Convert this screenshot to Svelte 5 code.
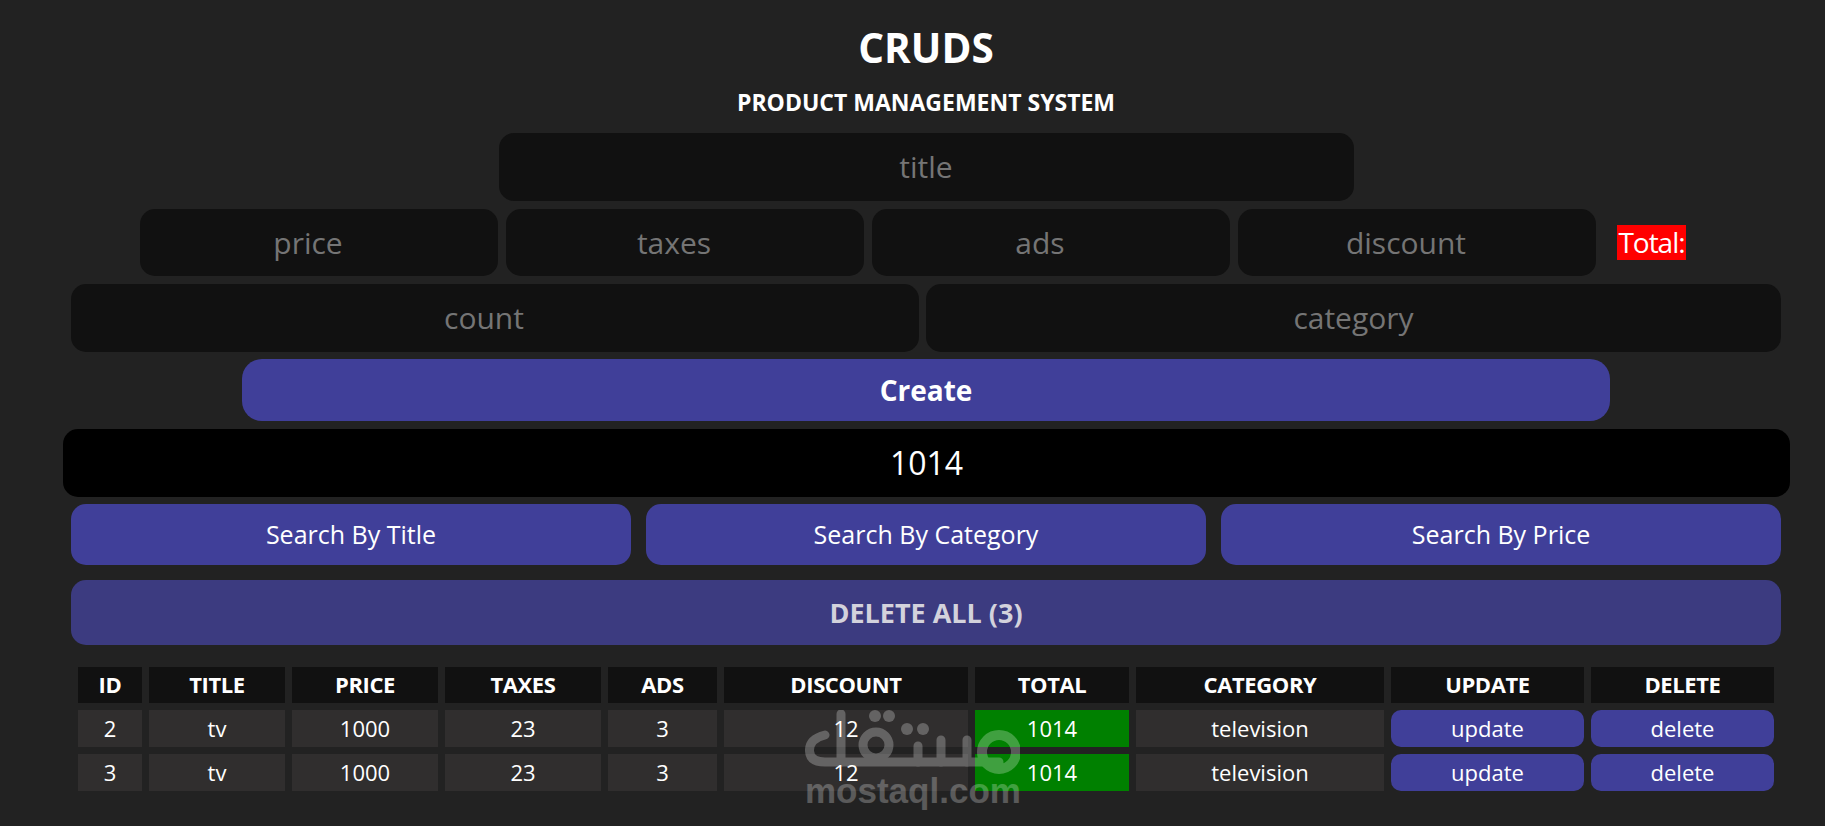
<script>
  const rows = [
    { id: 2, title: 'tv', price: 1000, taxes: 23, ads: 3, discount: 12, total: 1014, category: 'television' },
    { id: 3, title: 'tv', price: 1000, taxes: 23, ads: 3, discount: 12, total: 1014, category: 'television' }
  ];
  const cols = ['ID', 'TITLE', 'PRICE', 'TAXES', 'ADS', 'DISCOUNT', 'TOTAL', 'CATEGORY', 'UPDATE', 'DELETE'];
  const widths = [64, 136, 146, 156, 109, 244, 154, 248, 193, 183];
</script>

<main class="page">
  <header class="head">
    <h1>CRUDS</h1>
    <p>PRODUCT MANAGEMENT SYSTEM</p>
  </header>

  <div class="row center">
    <input class="field title" placeholder="title" />
  </div>

  <div class="row prices">
    <input class="field shifted" placeholder="price" />
    <input class="field shifted" placeholder="taxes" />
    <input class="field shifted" placeholder="ads" />
    <input class="field shifted" placeholder="discount" />
    <small class="total">Total:</small>
  </div>

  <div class="row pair">
    <input class="field shifted count" placeholder="count" />
    <input class="field category" placeholder="category" />
  </div>

  <button class="create">Create</button>

  <input class="search" value="1014" />

  <div class="row trio">
    <button class="btn">Search By Title</button>
    <button class="btn">Search By Category</button>
    <button class="btn">Search By Price</button>
  </div>

  <button class="clear">DELETE ALL (3)</button>

  <table>
    <colgroup>
      {#each widths as w}<col style="width:{w}px" />{/each}
    </colgroup>
    <thead>
      <tr>{#each cols as c}<th>{c}</th>{/each}</tr>
    </thead>
    <tbody>
      {#each rows as r}
        <tr>
          <td>{r.id}</td>
          <td>{r.title}</td>
          <td>{r.price}</td>
          <td>{r.taxes}</td>
          <td>{r.ads}</td>
          <td>{r.discount}</td>
          <td class="green">{r.total}</td>
          <td>{r.category}</td>
          <td class="act">update</td>
          <td class="act">delete</td>
        </tr>
      {/each}
    </tbody>
  </table>
</main>

<div class="mark">
  <svg width="215" height="66" viewBox="0 0 215 66" aria-hidden="true">
    <g fill="none" stroke="#fff" stroke-width="9" stroke-linecap="round">
      <path d="M20 25 Q4 29 4.5 41 Q5 52 20 52 H194" />
      <path d="M36 4 V52" />
      <circle cx="71" cy="35" r="13" />
      <path d="M113 52 V36 M136 52 V30 M162 52 V30" />
    </g>
    <circle cx="194" cy="42" r="17" fill="none" stroke="#fff" stroke-width="10" />
    <g fill="#fff">
      <circle cx="70" cy="6" r="6" /><circle cx="84" cy="6" r="6" />
      <circle cx="102" cy="19" r="6" /><circle cx="118" cy="19" r="6" />
    </g>
  </svg>
  <span>mostaql.com</span>
</div>

<style>
  :global(body) {
    margin: 0;
    background: #222;
    overflow: hidden;
    font-family: "Open Sans", "Noto Sans", sans-serif;
    font-stretch: 88%;
  }
  .page {
    width: 1710px;
    margin-left: 71px;
    height: 826px;
    color: #fff;
    position: relative;
  }
  .head { text-align: center; height: 133px; }
  h1 {
    margin: 0;
    padding-top: 24px;
    font-size: 40.5px;
    line-height: 48px;
    font-weight: 700;
  }
  .head p {
    margin: 0;
    padding-top: 15px;
    font-size: 23px;
    line-height: 30px;
    font-weight: 700;
  }
  input, button {
    font: inherit;
    font-stretch: inherit;
    border: 0;
    outline: 0;
    text-align: center;
    color: #fff;
    box-sizing: border-box;
  }
  .field {
    background: #111;
    border-radius: 15px;
    font-size: 30px;
    height: 68px;
    min-width: 0;
    padding: 0 10px 2px;
  }
  .field.shifted { padding-right: 32px; }
  .field::placeholder { color: #757575; opacity: 1; }
  .row { display: flex; }
  .center { justify-content: center; margin-bottom: 8px; }
  .title { width: 855px; }
  .prices {
    padding-left: 69px;
    gap: 8px;
    align-items: center;
    margin-bottom: 8px;
  }
  .prices .field { width: 358px; flex: none; height: 67px; padding-bottom: 0; }
  .total {
    flex: none;
    margin-left: 13px;
    background: #f00;
    font-size: 28px;
    line-height: 35px;
    width: 69px;
    text-align: center;
    white-space: nowrap;
    letter-spacing: -1px;
  }
  .pair { gap: 7px; margin-bottom: 7px; }
  .pair .count { flex: none; width: 848px; }
  .pair .category { flex: none; width: 855px; }
  .create {
    display: block;
    width: 1368px;
    height: 62px;
    margin: 0 0 8px 171px;
    border-radius: 20px;
    background: #403f99;
    font-size: 28px;
    font-weight: 700;
  }
  .search {
    display: block;
    width: 1727px;
    height: 68px;
    margin: 0 -8px 7px;
    padding-bottom: 2px;
    background: #000;
    border-radius: 15px;
    font-size: 32px;
  }
  .trio { justify-content: space-between; margin-bottom: 15px; }
  .btn {
    width: 560px;
    height: 61px;
    padding-bottom: 3px;
    background: #403f99;
    border-radius: 15px;
    font-size: 25px;
  }
  .clear {
    display: block;
    width: 100%;
    height: 65px;
    background: #3c3b80;
    color: #d3d2dc;
    border-radius: 15px;
    font-size: 27px;
    font-weight: 700;
    margin-bottom: 15px;
  }
  table {
    width: 1710px;
    table-layout: fixed;
    border-collapse: separate;
    border-spacing: 7px;
  }
  th, td {
    padding: 0 0 2px;
    text-align: center;
    font-size: 22px;
    box-sizing: border-box;
  }
  th { background: #111; height: 36px; font-weight: 700; letter-spacing: -0.4px; }
  td { background: #302e2e; height: 37px; }
  td.green { background: #008000; }
  td.act { background: #403f99; border-radius: 10px; }
  .mark {
    position: absolute;
    left: 805px;
    top: 710px;
    width: 215px;
    opacity: 0.25;
    pointer-events: none;
    color: #fff;
  }
  .mark svg { display: block; }
  .mark span {
    display: block;
    margin-top: -2px;
    font-family: "Liberation Sans", sans-serif;
    font-stretch: normal;
    font-weight: 700;
    font-size: 35px;
    line-height: 34px;
    text-align: center;
    white-space: nowrap;
  }
</style>
